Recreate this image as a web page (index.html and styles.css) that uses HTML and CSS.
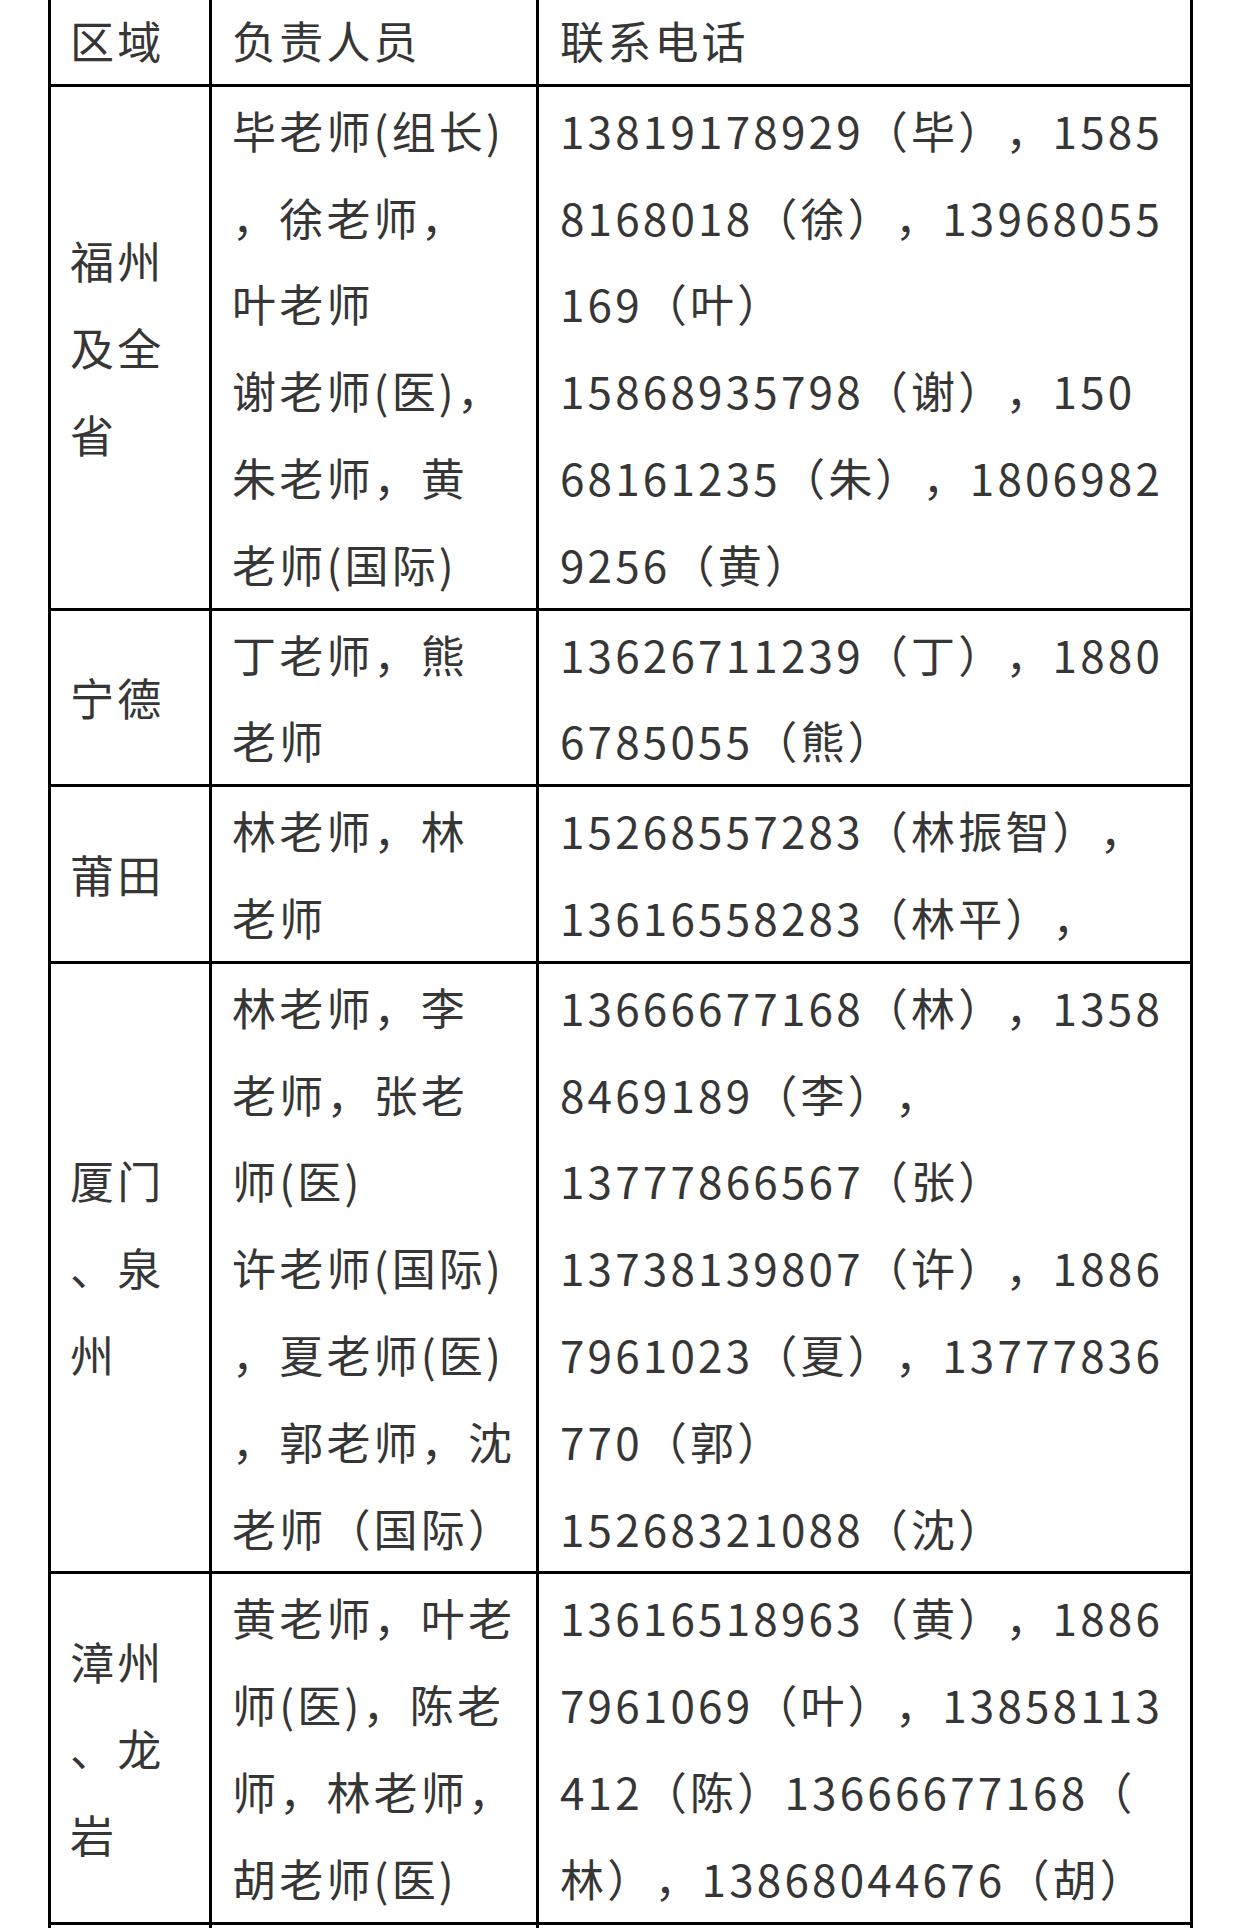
FILE: index.html
```html
<!DOCTYPE html>
<html lang="zh-CN">
<head>
<meta charset="utf-8">
<title>联系方式</title>
<link rel="stylesheet" href="styles.css">
</head>
<body>
<table class="contacts">
  <colgroup>
    <col class="c-area">
    <col class="c-person">
    <col class="c-phone">
  </colgroup>
  <tbody>
    <tr>
      <td class="area">区域</td>
      <td class="person">负责人员</td>
      <td class="phone">联系电话</td>
    </tr>
    <tr>
      <td class="area">福州<br>及全<br>省</td>
      <td class="person">毕老师(组长)<br>，徐老师，<br>叶老师<br>谢老师(医)，<br>朱老师，黄<br>老师(国际)</td>
      <td class="phone">13819178929（毕），1585<br>8168018（徐），13968055<br>169（叶）<br>15868935798（谢），150<br>68161235（朱），1806982<br>9256（黄）</td>
    </tr>
    <tr>
      <td class="area">宁德</td>
      <td class="person">丁老师，熊<br>老师</td>
      <td class="phone">13626711239（丁），1880<br>6785055（熊）</td>
    </tr>
    <tr>
      <td class="area">莆田</td>
      <td class="person">林老师，林<br>老师</td>
      <td class="phone">15268557283（林振智），<br>13616558283（林平），</td>
    </tr>
    <tr>
      <td class="area">厦门<br>、泉<br>州</td>
      <td class="person">林老师，李<br>老师，张老<br>师(医)<br>许老师(国际)<br>，夏老师(医)<br>，郭老师，沈<br>老师（国际）</td>
      <td class="phone">13666677168（林），1358<br>8469189（李），<br>13777866567（张）<br>13738139807（许），1886<br>7961023（夏），13777836<br>770（郭）<br>15268321088（沈）</td>
    </tr>
    <tr>
      <td class="area">漳州<br>、龙<br>岩</td>
      <td class="person">黄老师，叶老<br>师(医)，陈老<br>师，林老师，<br>胡老师(医)</td>
      <td class="phone">13616518963（黄），1886<br>7961069（叶），13858113<br>412（陈）13666677168（<br>林），13868044676（胡）</td>
    </tr>
    <tr>
      <td class="area">&nbsp;</td>
      <td class="person">&nbsp;</td>
      <td class="phone">&nbsp;</td>
    </tr>
  </tbody>
</table>
</body>
</html>
```

FILE: styles.css
```css
html, body {
  margin: 0;
  padding: 0;
  background: #ffffff;
}

body {
  font-family: "Noto Sans CJK SC", "Noto Sans", sans-serif;
  color: #363636;
}

.contacts {
  border-collapse: collapse;
  table-layout: fixed;
  width: 1142px;
  margin: -6px 0 0 48px;
  font-size: 44px;
  line-height: 86.8px;
  letter-spacing: 3.2px;
  text-spacing-trim: space-all;
  font-kerning: none;
}

.c-area { width: 161px; }
.c-person { width: 327px; }
.c-phone { width: 654px; }

.contacts td {
  border: 3px solid #000000;
  padding: 0 8px 0 19px;
  white-space: nowrap;
  vertical-align: middle;
  text-align: left;
}

.contacts td.person {
  padding-left: 20px;
}

.contacts td.phone {
  padding-left: 21px;
}
```
